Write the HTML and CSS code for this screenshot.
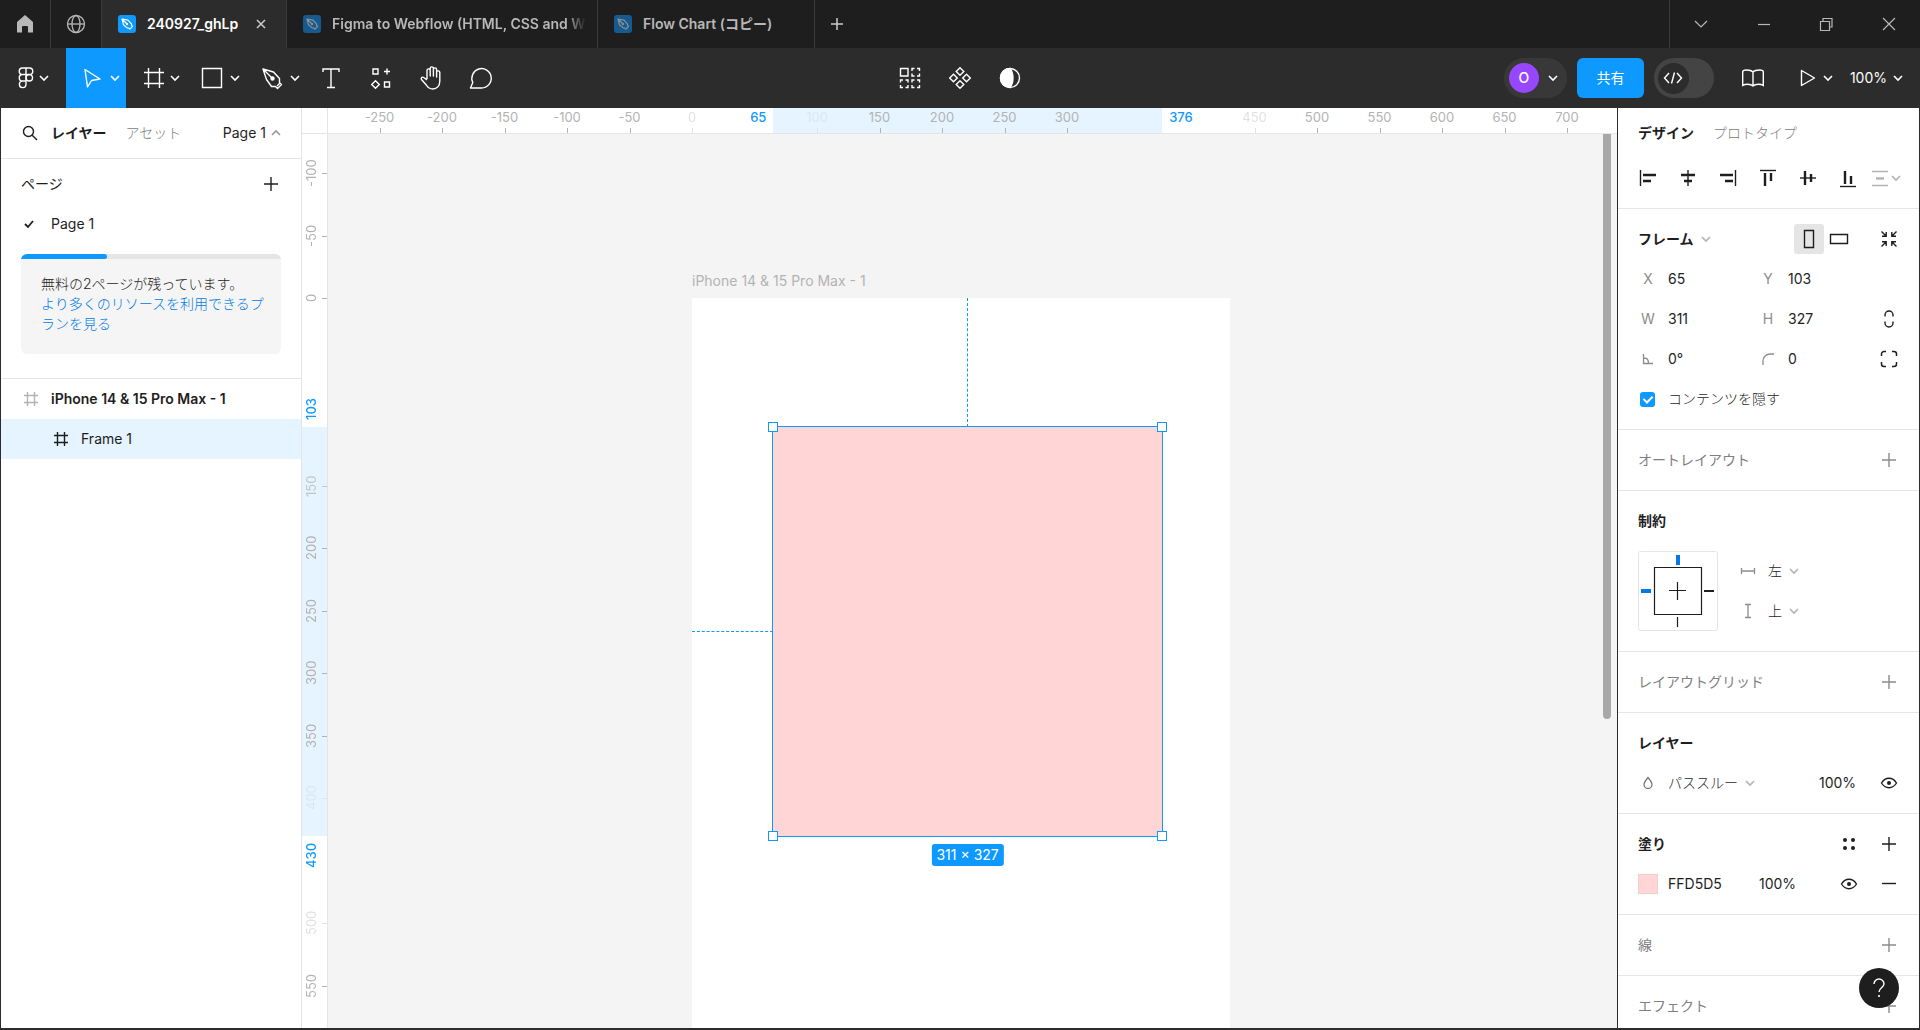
FILE: index.html
```html
<!DOCTYPE html>
<html lang="ja">
<head>
<meta charset="utf-8">
<title>240927_ghLp</title>
<link rel="stylesheet" href="styles.css">
</head>
<body>
<svg class="defs" aria-hidden="true">
  <symbol id="chev" viewBox="0 0 12 12"><path d="M2 4l4 4 4-4" fill="none" stroke="currentColor" stroke-width="1.6"/></symbol>
  <symbol id="plus" viewBox="0 0 16 16"><path d="M8 1v14M1 8h14" fill="none" stroke="currentColor" stroke-width="1.4"/></symbol>
  <symbol id="frame" viewBox="0 0 16 16"><path d="M4.500 1v14M11.500 1v14M1 4.500h14M1 11.500h14" fill="none" stroke="currentColor" stroke-width="1.4"/></symbol>
  <symbol id="eye" viewBox="0 0 20 20"><path d="M2.500 10C4.500 6.800 7 5.300 10 5.300s5.500 1.500 7.500 4.700c-2 3.200-4.500 4.700-7.500 4.700S4.500 13.200 2.500 10z" fill="none" stroke="currentColor" stroke-width="1.4"/><circle cx="10" cy="10" r="2" fill="currentColor" stroke="none"/></symbol>
  <symbol id="file" viewBox="0 0 18 18"><rect width="18" height="18" rx="3" fill="#0d99ff"/><path d="M4 4l6 1.200 3.400 3.600.2 1.600 1 1-2.700 2.700-1-1-1.700-.2L5.500 9.800 4 4zl4.500 4.500" fill="none" stroke="#fff" stroke-width="1.200" stroke-linejoin="round"/><circle cx="9" cy="9" r="1.200" fill="#fff"/></symbol>
</svg>

<header class="titlebar">
  <button class="tab tab-icon" aria-label="ホーム"><svg width="18" height="20" viewBox="0 0 18 20"><path d="M9 1l8 7v10.500h-5v-5.500a1 1 0 0 0-1-1H7a1 1 0 0 0-1 1v5.500H1V8z" fill="#b8b8b8"/></svg></button>
  <button class="tab tab-icon" aria-label="コミュニティ"><svg width="20" height="20" viewBox="0 0 20 20" fill="none" stroke="#b8b8b8" stroke-width="1.300"><circle cx="10" cy="10" r="8.500"/><ellipse cx="10" cy="10" rx="4" ry="8.500"/><path d="M1.500 10h17"/></svg></button>
  <div class="tab tab-file tab-a active"><svg class="file"><use href="#file"/></svg><span class="tab-name">240927_ghLp</span><button class="close" aria-label="閉じる"><svg width="10" height="10" viewBox="0 0 10 10"><path d="M1 1l8 8M9 1l-8 8" stroke="#ccc" stroke-width="1.500"/></svg></button></div>
  <div class="tab tab-file tab-b"><svg class="file"><use href="#file"/></svg><span class="tab-name fade">Figma to Webflow (HTML, CSS and W</span></div>
  <div class="tab tab-file tab-c"><svg class="file"><use href="#file"/></svg><span class="tab-name">Flow Chart (コピー)</span></div>
  <button class="new-tab" aria-label="新規タブ"><svg width="12" height="12" viewBox="0 0 12 12"><path d="M6 0v12M0 6h12" stroke="#ccc" stroke-width="1.500"/></svg></button>
  <div class="window-buttons">
    <button aria-label="タブ一覧"><svg width="14" height="14" viewBox="0 0 14 14"><path d="M1 4l6 6 6-6"/></svg></button>
    <button aria-label="最小化"><svg width="14" height="14" viewBox="0 0 14 14"><path d="M1 7.500h12"/></svg></button>
    <button aria-label="元に戻す"><svg width="14" height="14" viewBox="0 0 14 14"><path d="M1.500 4.500h9v9h-9zM4 4V1.500h9V10h-2.500"/></svg></button>
    <button aria-label="ウィンドウを閉じる"><svg width="14" height="14" viewBox="0 0 14 14"><path d="M1 1l12 12M13 1L1 13"/></svg></button>
  </div>
</header>

<nav class="toolbar">
  <div class="tools">
    <button class="tool menu-tool" aria-label="メニュー"><svg class="ic" viewBox="0 0 24 24"><path d="M12 2H8.500a3.200 3.200 0 0 0 0 6.500H12zM12 2h3.500a3.200 3.200 0 0 1 0 6.500H12zM12 8.500H8.500a3.200 3.200 0 0 0 0 6.500H12zM12 15H8.500a3.300 3.300 0 1 0 3.500 3.300z"/><circle cx="15.300" cy="11.800" r="3.200"/></svg><svg class="chev"><use href="#chev"/></svg></button>
    <button class="tool split selected" aria-label="移動"><svg class="ic" viewBox="0 0 24 24"><path d="M5 3.500l15 9.500-8.500 1.500L7.500 21z" stroke-linejoin="round"/></svg><svg class="chev"><use href="#chev"/></svg></button>
    <button class="tool split" aria-label="フレーム"><svg class="ic" viewBox="0 0 24 24"><path d="M8.500 2v20M19.500 2v20M4 6.500h20M4 17.500h20"/></svg><svg class="chev"><use href="#chev"/></svg></button>
    <button class="tool split" aria-label="長方形"><svg class="ic" viewBox="0 0 24 24"><path d="M2.500 2.500h19v19h-19z"/></svg><svg class="chev"><use href="#chev"/></svg></button>
    <button class="tool split" aria-label="ペン"><svg class="ic" viewBox="0 0 24 24"><path d="M3 3l10.500 3 6 6.500v4l2 2-4 4-2-2h-4L6.500 13.500zM3 3l9 9M17 20l3-3" stroke-linejoin="round"/><circle cx="12.500" cy="12.500" r="1.500" fill="#fff"/></svg><svg class="chev"><use href="#chev"/></svg></button>
    <button class="tool" aria-label="テキスト"><svg class="ic" viewBox="0 0 24 24"><path d="M4 6V3h16v3M12 3v19M8 21.500h8"/></svg></button>
    <button class="tool" aria-label="リソース"><svg class="ic" viewBox="0 0 24 24"><path d="M4 3h5v5H4zM15.500 16h5v5h-5zM18 2.500v6M15 5.500h6M6.500 14.700l3.800 3.800-3.800 3.800-3.800-3.800z"/></svg></button>
    <button class="tool" aria-label="手のひら"><svg class="ic" viewBox="0 0 24 24"><path d="M8 13V4.500a1.600 1.600 0 0 1 3.200 0V10 2.500a1.600 1.600 0 0 1 3.200 0V10 3.500a1.600 1.600 0 0 1 3.200 0V11 6.500a1.600 1.600 0 0 1 3.200 0V15c0 5-3 8-7 8-3.500 0-5-1.500-6.500-4l-4.800-5.500c-1-1.400.7-3 2.200-2L8 14" stroke-linejoin="round"/></svg></button>
    <button class="tool" aria-label="コメント"><svg class="ic" viewBox="0 0 24 24"><path d="M1.500 22l2.300-5.500A9.700 9.700 0 1 1 12.500 22z" stroke-linejoin="round"/></svg></button>
  </div>
  <div class="tools">
    <button class="tool" aria-label="選択"><svg class="ic" viewBox="0 0 24 24"><path d="M2.500 2.500h7.500v7.500H2.500zM14 5V2.500h2.500M19 2.500h2.500V5M21.500 7.500V10H19M16.500 10H14V7.500M2.500 16.500V14H5M7.500 14H10v2.500M10 19v2.500H7.500M5 21.500H2.500V19M14 16.500V14h2.500M19 14h2.500v2.500M21.500 19v2.500H19M16.500 21.500H14V19"/></svg></button>
    <button class="tool" aria-label="コンポーネント"><svg class="ic" viewBox="0 0 24 24"><path d="M12 1.700l3.800 3.800L12 9.300 8.200 5.500zM12 14.700l3.800 3.800-3.800 3.800-3.800-3.800zM5.500 8.200L9.300 12l-3.800 3.800L1.700 12zM18.500 8.200l3.800 3.800-3.800 3.800-3.800-3.800z"/></svg></button>
    <button class="tool" aria-label="マスク"><svg class="ic" viewBox="0 0 24 24"><circle cx="12" cy="12" r="9.500"/><path d="M12 2.500c4 5 4 14 0 19A9.500 9.500 0 0 1 12 2.500z" fill="#fff"/></svg></button>
  </div>
  <div class="tools tools-end">
    <button class="account"><span class="avatar">O</span><svg class="chev"><use href="#chev"/></svg></button>
    <button class="share">共有</button>
    <button class="devmode" aria-label="開発モード"><span class="knob"><svg width="20" height="14" viewBox="0 0 20 14" fill="none" stroke="#fff" stroke-width="1.400"><path d="M6 2L1.500 7 6 12M14 2l4.500 5L14 12M11.500 1.500l-3 11"/></svg></span></button>
    <button class="tool book" aria-label="ライブラリ"><svg class="ic" viewBox="0 0 24 24"><path d="M12 6C10.500 4.300 8 4 5.500 4 4 4 1.700 4.300 1.700 6v13.500C4 18 9.500 17.500 12 20c2.500-2.500 8-2 10.300-.5V6c0-1.700-2.300-2-3.800-2C16 4 13.500 4.300 12 6zv14"/></svg></button>
    <button class="play" aria-label="プレゼンテーション"><svg width="16" height="18" viewBox="0 0 16 18"><path d="M1.500 1.500l13 7.500-13 7.500z" fill="none" stroke="#fff" stroke-width="1.400" stroke-linejoin="round"/></svg><svg class="chev"><use href="#chev"/></svg></button>
    <button class="zoom"><span>100%</span><svg class="chev"><use href="#chev"/></svg></button>
  </div>
</nav>

<main class="editor">
  <aside class="left">
    <div class="left-head">
      <button class="search" aria-label="検索"><svg width="16" height="16" viewBox="0 0 16 16" fill="none" stroke="#1e1e1e" stroke-width="1.400"><circle cx="6.500" cy="6.500" r="5"/><path d="M10.200 10.200L15 15"/></svg></button>
      <button class="ptab on">レイヤー</button>
      <button class="ptab">アセット</button>
      <button class="page-toggle"><span>Page 1</span><svg class="chev up"><use href="#chev"/></svg></button>
    </div>
    <section class="pages">
      <div class="pages-title"><h2>ページ</h2><button aria-label="ページを追加"><svg class="i16"><use href="#plus"/></svg></button></div>
      <button class="page-row"><svg width="12" height="12" viewBox="0 0 12 12"><path d="M2 6l3 3 5-6" fill="none" stroke="#1e1e1e" stroke-width="1.800"/></svg><span>Page 1</span></button>
      <div class="upsell"><div class="meter"><div class="meter-fill"></div></div><p>無料の2ページが残っています。<br><a href="#">より多くのリソースを利用できるプランを見る</a></p></div>
    </section>
    <ul class="layers">
      <li class="layer top"><svg class="i16"><use href="#frame"/></svg><span>iPhone 14 &amp; 15 Pro Max - 1</span></li>
      <li class="layer child"><svg class="i16"><use href="#frame"/></svg><span>Frame 1</span></li>
    </ul>
  </aside>

  <div class="workspace">
    <div class="corner"></div>
    <div class="ruler rx">
      <div class="span"></div>
      <span class="n" style="--v:-250">-250</span><span class="n" style="--v:-200">-200</span><span class="n" style="--v:-150">-150</span><span class="n" style="--v:-100">-100</span><span class="n" style="--v:-50">-50</span><span class="n faint" style="--v:0">0</span><span class="n fainter" style="--v:100">100</span><span class="n" style="--v:150">150</span><span class="n" style="--v:200">200</span><span class="n" style="--v:250">250</span><span class="n" style="--v:300">300</span><span class="n faint" style="--v:450">450</span><span class="n" style="--v:500">500</span><span class="n" style="--v:550">550</span><span class="n" style="--v:600">600</span><span class="n" style="--v:650">650</span><span class="n" style="--v:700">700</span>
      <span class="edge before">65</span><span class="edge after">376</span>
    </div>
    <div class="ruler ry">
      <div class="span"></div>
      <span class="n" style="--v:-100">-100</span><span class="n" style="--v:-50">-50</span><span class="n" style="--v:0">0</span><span class="n half" style="--v:150">150</span><span class="n" style="--v:200">200</span><span class="n" style="--v:250">250</span><span class="n" style="--v:300">300</span><span class="n" style="--v:350">350</span><span class="n fainter" style="--v:400">400</span><span class="n faint" style="--v:500">500</span><span class="n" style="--v:550">550</span>
      <span class="edge before">103</span><span class="edge after">430</span>
    </div>
    <div class="canvas">
      <div class="artboard-name">iPhone 14 &amp; 15 Pro Max - 1</div>
      <div class="artboard"></div>
      <div class="guide-v"></div>
      <div class="guide-h"></div>
      <div class="selection"><i class="h tl"></i><i class="h tr"></i><i class="h bl"></i><i class="h br"></i><span class="size">311 × 327</span></div>
      <div class="scrollbar"></div>
    </div>
  </div>

  <aside class="right">
    <div class="right-head"><button class="ptab on">デザイン</button><button class="ptab">プロトタイプ</button></div>
    <div class="align">
      <button aria-label="左揃え"><svg class="i20" viewBox="0 0 20 20"><path d="M2.500 2v16" stroke-width="1.400"/><path d="M5 7h13M5 13h8" stroke-width="2.400"/></svg></button>
      <button aria-label="水平方向の中央揃え"><svg class="i20" viewBox="0 0 20 20"><path d="M10 2v16" stroke-width="1.400"/><path d="M3 7h14M6 13h8" stroke-width="2.400"/></svg></button>
      <button aria-label="右揃え"><svg class="i20" viewBox="0 0 20 20"><path d="M17.500 2v16" stroke-width="1.400"/><path d="M2 7h13M7 13h8" stroke-width="2.400"/></svg></button>
      <button aria-label="上揃え"><svg class="i20" viewBox="0 0 20 20"><path d="M2 2.500h16" stroke-width="1.400"/><path d="M7 5v13M13 5v8" stroke-width="2.400"/></svg></button>
      <button aria-label="垂直方向の中央揃え"><svg class="i20" viewBox="0 0 20 20"><path d="M2 10h16" stroke-width="1.400"/><path d="M7 3v14M13 6v8" stroke-width="2.400"/></svg></button>
      <button aria-label="下揃え"><svg class="i20" viewBox="0 0 20 20"><path d="M2 18.500h16" stroke-width="1.400"/><path d="M7 3v13M13 8v8" stroke-width="2.400"/></svg></button>
      <button class="tidy" aria-label="整列"><svg class="i20" viewBox="0 0 20 20"><path d="M2 3.500h16M2 17.500h16" stroke-width="1.400"/><path d="M6 10.500h8" stroke-width="2.400"/></svg><svg class="chev"><use href="#chev"/></svg></button>
    </div>

    <section>
      <div class="row head">
        <h2>フレーム</h2><svg class="chev grey"><use href="#chev"/></svg>
        <div class="orient"><button class="on" aria-label="縦向き"><svg class="i20" viewBox="0 0 20 20"><path d="M5.500 1.500h9v17h-9z" stroke-width="1.400"/></svg></button><button aria-label="横向き"><svg class="i20" viewBox="0 0 20 20"><path d="M1.500 5.500h17v9h-17z" stroke-width="1.400"/></svg></button></div>
        <button class="act" aria-label="サイズを内容に合わせる"><svg class="i20" viewBox="0 0 20 20"><path d="M2.500 2.500l4.500 4.500M7.200 3v4.200H3M17.500 2.500L13 7M12.800 3v4.200H17M2.500 17.500L7 13M7.200 17v-4.200H3M17.500 17.500L13 13M12.800 17v-4.200H17" stroke-width="1.400"/></svg></button>
      </div>
      <div class="row grid"><label class="field"><span>X</span><input value="65"></label><label class="field"><span>Y</span><input value="103"></label></div>
      <div class="row grid"><label class="field"><span>W</span><input value="311"></label><label class="field"><span>H</span><input value="327"></label><button class="act" aria-label="縦横比を固定"><svg class="i20" viewBox="0 0 20 20"><path d="M6 7.500V6a4 4 0 0 1 8 0v1.500M6 12.500V14a4 4 0 0 0 8 0v-1.500" stroke-width="1.400"/></svg></button></div>
      <div class="row grid"><label class="field"><span><svg width="12" height="12" viewBox="0 0 12 12"><path d="M1.500 1v9.500H11M2 5c3 0 4.500 2 4.500 5" fill="none" stroke="#8c8c8c" stroke-width="1.300"/></svg></span><input value="0°" aria-label="回転"></label><label class="field"><span><svg width="12" height="12" viewBox="0 0 12 12"><path d="M1 12V8a7 7 0 0 1 7-7h4" fill="none" stroke="#8c8c8c" stroke-width="1.300"/></svg></span><input value="0" aria-label="角の半径"></label><button class="act" aria-label="個別の角"><svg class="i20" viewBox="0 0 20 20"><path d="M2.500 7V5a2.500 2.500 0 0 1 2.500-2.500h2M13 2.500h2A2.500 2.500 0 0 1 17.500 5v2M17.500 13v2a2.500 2.500 0 0 1-2.500 2.500h-2M7 17.500H5A2.500 2.500 0 0 1 2.500 15v-2" stroke-width="1.500"/></svg></button></div>
      <label class="row clip"><input type="checkbox" checked><span>コンテンツを隠す</span></label>
    </section>

    <section class="empty"><div class="row head"><h2>オートレイアウト</h2><button class="act" aria-label="追加"><svg class="i16"><use href="#plus"/></svg></button></div></section>

    <section>
      <div class="row head"><h2>制約</h2></div>
      <div class="constraints">
        <svg width="80" height="80" viewBox="0 0 80 80" fill="none"><rect x=".5" y=".5" width="79" height="79" rx="2" stroke="#e5e5e5"/><path d="M16.500 16.500h47v47h-47zM31 39.500h17M39.500 31v18M39.500 66v10" stroke="#1e1e1e" stroke-width="1.200"/><path d="M66 40h10" stroke="#1e1e1e" stroke-width="2"/><path d="M40 4v10M3 40h10" stroke="#007be5" stroke-width="4"/></svg>
        <div>
          <label class="row pick"><svg width="20" height="20" viewBox="0 0 20 20"><path d="M3.500 7v6M16.500 7v6M3.500 10h13" stroke="#8c8c8c" stroke-width="1.300"/></svg><select aria-label="水平方向の制約"><option>左</option></select><svg class="chev grey"><use href="#chev"/></svg></label>
          <label class="row pick"><svg width="20" height="20" viewBox="0 0 20 20"><path d="M7 3.500h6M7 16.500h6M10 3.500v13" stroke="#8c8c8c" stroke-width="1.300"/></svg><select aria-label="垂直方向の制約"><option>上</option></select><svg class="chev grey"><use href="#chev"/></svg></label>
        </div>
      </div>
    </section>

    <section class="empty"><div class="row head"><h2>レイアウトグリッド</h2><button class="act" aria-label="追加"><svg class="i16"><use href="#plus"/></svg></button></div></section>

    <section>
      <div class="row head"><h2>レイヤー</h2></div>
      <div class="row layer-row"><label class="pick"><svg width="20" height="20" viewBox="0 0 20 20"><path d="M10 4.500C7.500 7.500 6 9.500 6 11.500a4 4 0 0 0 8 0c0-2-1.500-4-4-7z" fill="none" stroke="#777" stroke-width="1.300"/></svg><select aria-label="描画モード"><option>パススルー</option></select><svg class="chev grey"><use href="#chev"/></svg></label><input class="pct" value="100%" aria-label="不透明度"><button class="act" aria-label="表示"><svg class="i20"><use href="#eye"/></svg></button></div>
    </section>

    <section>
      <div class="row head"><h2>塗り</h2><button class="act push" aria-label="スタイル"><svg class="i20" viewBox="0 0 20 20"><g fill="#1e1e1e" stroke="none"><circle cx="6" cy="6" r="2"/><circle cx="14" cy="6" r="2"/><circle cx="6" cy="14" r="2"/><circle cx="14" cy="14" r="2"/></g></svg></button><button class="act last" aria-label="追加"><svg class="i16"><use href="#plus"/></svg></button></div>
      <div class="row fill-row"><button class="swatch" aria-label="色"></button><input class="hex" value="FFD5D5" aria-label="色コード"><input class="pct" value="100%" aria-label="塗りの不透明度"><button class="act push" aria-label="表示"><svg class="i20"><use href="#eye"/></svg></button><button class="act last" aria-label="削除"><svg class="i16" viewBox="0 0 16 16"><path d="M1 7.500h14" stroke-width="1.400"/></svg></button></div>
    </section>

    <section class="empty"><div class="row head"><h2>線</h2><button class="act" aria-label="追加"><svg class="i16"><use href="#plus"/></svg></button></div></section>
    <section class="empty"><div class="row head"><h2>エフェクト</h2><button class="act" aria-label="追加"><svg class="i16"><use href="#plus"/></svg></button></div></section>
    <button class="help" aria-label="ヘルプ"><svg width="14" height="20" viewBox="0 0 14 20"><path d="M2 6a5 5 0 0 1 10 0c0 3.500-5 3.500-5 8" fill="none" stroke="#fff" stroke-width="1.400"/><circle cx="7" cy="18" r="1.100" fill="#fff"/></svg></button>
  </aside>
</main>
</body>
</html>
```

FILE: styles.css
```css
* { box-sizing: border-box; }

body {
  margin: 0;
  height: 100vh;
  display: flex;
  flex-direction: column;
  overflow: hidden;
  background: #2c2c2c;
  color: #1e1e1e;
  font: 400 14px/20px Inter, "Noto Sans CJK JP", sans-serif;
}

button, input, select {
  font: inherit;
  color: inherit;
  background: none;
  border: 0;
  padding: 0;
  margin: 0;
  border-radius: 0;
}
button { display: flex; align-items: center; justify-content: center; }
select { appearance: none; }
svg { display: block; flex: none; }
h2 { margin: 0; font-size: 14px; font-weight: 600; }
p, ul { margin: 0; padding: 0; list-style: none; }

.defs { position: absolute; width: 0; height: 0; }
.chev { width: 12px; height: 12px; }
.grey { color: #b3b3b3; }
.up { transform: rotate(180deg); color: #999; }
.i16 { width: 16px; height: 16px; stroke: #1e1e1e; }
.i20 { width: 20px; height: 20px; fill: none; stroke: #1e1e1e; }

/* Title bar */
.titlebar { display: flex; flex: none; height: 48px; background: #1e1e1e; color: #b8b8b8; }
.tab { display: flex; align-items: center; border-right: 1px solid #3a3a3a; }
.tab-icon { width: 51px; }
.tab-file { padding: 0 16px; gap: 11px; font-weight: 600; }
.tab-file .file { width: 18px; height: 18px; opacity: .5; }
.tab-a { width: 185px; }
.tab-b { width: 311px; }
.tab-c { width: 217px; }
.active { background: #2c2c2c; color: #fff; }
.active .file { opacity: 1; }
.tab-name { white-space: nowrap; }
.fade { mask-image: linear-gradient(to right, #000 92%, transparent); }
.close { margin-left: auto; width: 18px; height: 18px; }
.new-tab { width: 44px; }
.window-buttons { display: flex; margin-left: auto; width: 251px; border-left: 1px solid #3a3a3a; }
.window-buttons button { flex: 1; }
.window-buttons svg { fill: none; stroke: #b8b8b8; stroke-width: 1.200; }

/* Toolbar */
.toolbar { display: grid; grid-template-columns: 1fr auto 1fr; flex: none; height: 60px; background: #2c2c2c; color: #fff; }
.tools { display: flex; align-items: center; }
.tools-end { justify-content: flex-end; gap: 10px; }
.tool { width: 50px; height: 60px; }
.ic { width: 24px; height: 24px; fill: none; stroke: #fff; stroke-width: 1.400; }
.menu-tool { width: 66px; justify-content: flex-start; padding-left: 14px; }
.split { width: 60px; justify-content: flex-start; padding-left: 14px; gap: 5px; }
.selected { background: #0d99ff; }
.account { width: 63px; height: 40px; border-radius: 20px; background: #383838; justify-content: flex-start; padding-left: 5px; gap: 8px; }
.avatar { width: 30px; height: 30px; border-radius: 50%; background: #9747ff; line-height: 30px; font-weight: 500; }
.share { width: 67px; height: 40px; border-radius: 6px; background: #0d99ff; }
.devmode { width: 60px; height: 40px; border-radius: 20px; background: #444; justify-content: flex-start; padding-left: 4px; }
.knob { width: 31px; height: 31px; border-radius: 50%; background: #2c2c2c; display: grid; place-items: center; }
.book { margin-left: 4px; }
.play { gap: 6px; margin-left: 12px; }
.zoom { gap: 5px; margin: 0 16px 0 6px; }

/* Editor */
.editor { flex: 1; min-height: 0; display: grid; grid-template-columns: 301px 1fr 302px; margin: 0 1px 2px; background: #fff; }

.left { border-right: 1px solid #e5e5e5; }
.left-head { display: flex; align-items: center; height: 51px; padding: 0 20px 0 21px; border-bottom: 1px solid #e5e5e5; }
.search { width: 16px; margin-right: 13px; }
.ptab { color: #808080; margin-right: 19px; font-weight: 300; }
.ptab.on { color: #1e1e1e; font-weight: 600; }
.page-toggle { margin-left: auto; gap: 4px; margin-right: -1px; }
.pages { padding: 5px 20px 24px; border-bottom: 1px solid #e5e5e5; }
.pages-title { display: flex; align-items: center; justify-content: space-between; height: 40px; }
.pages-title h2 { font-weight: 400; }
.pages-title button { width: 20px; height: 20px; }
.page-row { height: 40px; gap: 16px; padding-left: 2px; }
.upsell { margin-top: 10px; height: 100px; border-radius: 6px; background: #f5f5f5; overflow: hidden; }
.meter { height: 5px; background: #e5e5e5; }
.meter-fill { width: 33%; height: 5px; border-radius: 0 3px 3px 0; background: #0d99ff; }
.upsell p { padding: 15px 14px 0 20px; font-weight: 300; }
.upsell a { color: #007be5; text-decoration: none; }
.layer { display: flex; align-items: center; height: 40px; gap: 12px; padding-left: 22px; }
.top { font-weight: 600; }
.top svg { color: #b3b3b3; }
.layer svg { stroke: none; }
.child { padding-left: 52px; background: #e5f4ff; }

/* Rulers and canvas share one origin: canvas units are 5/4 px */
.workspace {
  --u: calc(5px / 4);
  --ox: 364px;
  --oy: 164px;
  display: grid;
  grid-template: 26px 1fr / 26px 1fr;
  min-width: 0;
  min-height: 0;
  overflow: hidden;
}
.corner { border-right: 1px solid #e5e5e5; border-bottom: 1px solid #e5e5e5; }
.ruler { position: relative; overflow: hidden; font-size: 13px; color: #b3b3b3; }
.rx { border-bottom: 1px solid #e5e5e5; }
.ry { border-right: 1px solid #e5e5e5; }
.span { position: absolute; background: #e5f4ff; }
.rx .span { top: 0; bottom: 0; left: calc(var(--ox) + 65 * var(--u)); width: calc(311 * var(--u)); }
.ry .span { left: 0; right: 0; top: calc(var(--oy) + 103 * var(--u)); height: calc(327 * var(--u)); }
.n, .edge { position: absolute; text-align: center; line-height: 18px; }
.n::after { content: ""; position: absolute; background: #b3b3b3; }
.rx .n, .rx .edge { top: 0; width: 60px; height: 25px; }
.rx .n { left: calc(var(--ox) + var(--v) * var(--u) - 30px); }
.rx .n::after { left: 30px; bottom: 0; width: 1px; height: 5px; }
.ry .n, .ry .edge { left: 0; width: 25px; height: 60px; padding-left: 7px; writing-mode: vertical-rl; transform: rotate(180deg); }
.ry .n { top: calc(var(--oy) + var(--v) * var(--u) - 30px); }
.ry .n::after { left: 0; top: 29px; width: 5px; height: 1px; }
.half { opacity: .7; }
.faint { opacity: .4; }
.fainter { opacity: .2; }
.edge { color: #0d99ff; font-weight: 500; }
.rx .before { left: calc(var(--ox) + 65 * var(--u) - 45px); }
.rx .after { left: calc(var(--ox) + 376 * var(--u) - 11px); }
.ry .before { top: calc(var(--oy) + 103 * var(--u) - 48px); }
.ry .after { top: calc(var(--oy) + 430 * var(--u) - 11px); }

.canvas { position: relative; overflow: hidden; background: #f4f4f4; }
.canvas > * { position: absolute; }
.artboard { left: var(--ox); top: var(--oy); width: calc(430 * var(--u)); height: calc(932 * var(--u)); background: #fff; }
.artboard-name { left: var(--ox); top: calc(var(--oy) - 27px); color: #b3b3b3; }
.selection {
  left: calc(var(--ox) + 65 * var(--u));
  top: calc(var(--oy) + 103 * var(--u));
  width: calc(311 * var(--u));
  height: calc(327 * var(--u));
  background: #ffd5d5;
  outline: 1px solid #0d99ff;
}
.guide-v { left: calc(var(--ox) + 220 * var(--u)); top: var(--oy); height: calc(103 * var(--u)); border-left: 1px dashed #0d99ff; }
.guide-h { left: var(--ox); top: calc(var(--oy) + 266 * var(--u)); width: calc(65 * var(--u)); border-top: 1px dashed #0d99ff; }
.h { position: absolute; width: 10px; height: 10px; background: #fff; border: 1px solid #0d99ff; }
.tl, .bl { left: -5px; }
.tr, .br { right: -5px; }
.tl, .tr { top: -5px; }
.bl, .br { bottom: -5px; }
.size { position: absolute; left: 50%; top: calc(100% + 8px); transform: translateX(-50%); padding: 1px 5px; border-radius: 3px; background: #0d99ff; color: #fff; white-space: nowrap; }
.scrollbar { right: 6px; top: 0; width: 8px; height: 585px; border-radius: 0 0 4px 4px; background: #a8a8a8; }

/* Properties panel */
.right { position: relative; overflow: hidden; border-left: 1px solid #2c2c2c; }
.right-head { display: flex; height: 50px; padding-left: 20px; align-items: center; }
.align { display: flex; height: 51px; padding: 0 10px 10px; border-bottom: 1px solid #e5e5e5; }
.align button { width: 40px; }
.align .tidy { margin-left: -2px; }
.tidy, .tidy svg { color: #b3b3b3; stroke: #b3b3b3; }
.tidy .chev { stroke: none; }
.right section { padding: 10px 10px 10px 20px; border-bottom: 1px solid #e5e5e5; }
.row { display: flex; align-items: center; height: 40px; }
.empty { color: #808080; }
.empty h2 { font-weight: 400; }
.empty .i16 { color: #8c8c8c; }
.head > .chev { margin-left: 6px; }
.act { width: 40px; height: 40px; margin-left: auto; }
.act.last { margin-left: 0; }
.orient { display: flex; margin-left: auto; }
.orient button { width: 30px; height: 30px; border-radius: 3px; }
.orient .on { background: #e5e5e5; }
.orient + .act { margin-left: 15px; }
.grid { display: grid; grid-template-columns: 120px 1fr 40px; }
.field { display: flex; gap: 10px; color: #1e1e1e; }
.field > span { width: 20px; color: #8c8c8c; display: grid; place-items: center; }
.field input { width: 60px; }
.clip { gap: 10px; font-weight: 300; }
.clip input { appearance: none; width: 15px; height: 15px; margin: 0 3px 0 2px; border-radius: 3px; background: #0d99ff; display: grid; place-items: center; }
.clip input::before { content: ""; width: 4px; height: 7px; margin-bottom: 2px; border: solid #fff; border-width: 0 2px 2px 0; transform: rotate(45deg); }
.constraints { display: flex; align-items: center; gap: 20px; height: 100px; }
.pick { display: flex; align-items: center; }
.pick select { margin-left: 10px; font-weight: 300; }
.pick .chev { margin-left: 6px; }
.layer-row .pct { margin-left: auto; }
.layer-row .act { margin-left: 13px; }
.pct { width: 37px; }
.swatch { width: 20px; height: 20px; background: #ffd5d5; border: 1px solid #f5cccc; }
.hex { width: 81px; margin: 0 0 0 10px; }
.fill-row .pct { margin-left: 10px; }
.help { position: absolute; right: 20px; bottom: 20px; width: 40px; height: 40px; border-radius: 50%; background: #1e1e1e; }
```
